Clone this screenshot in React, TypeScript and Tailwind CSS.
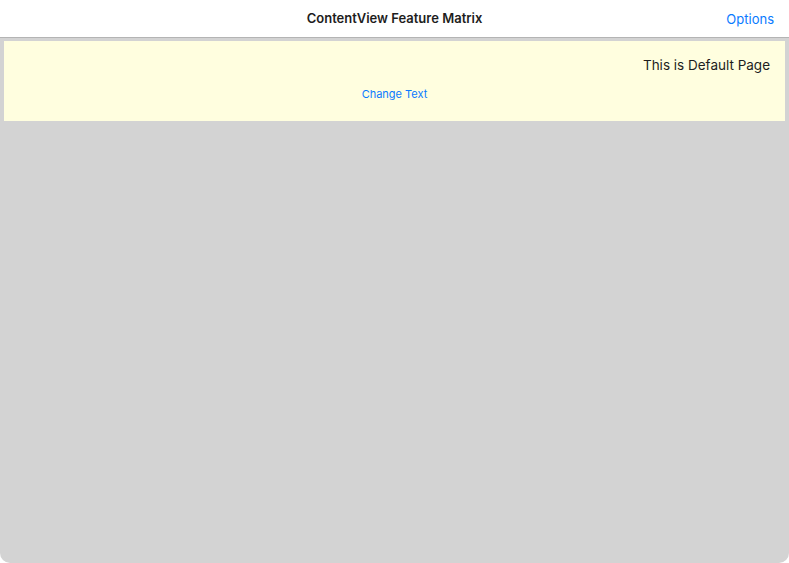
export default function App() {
  return (
    <div className="h-[563px] w-[789px] bg-white font-['Inter','Liberation_Sans',sans-serif]">
      <div className="flex h-full flex-col overflow-hidden rounded-b-[10px] bg-[#d3d3d3]">
        <header className="relative flex h-[38px] shrink-0 items-center justify-center border-b border-[#b4b4b4] bg-white">
          <h1 className="text-[13px] font-semibold text-[#1d1d1d]">ContentView Feature Matrix</h1>
          <button className="absolute right-[15px] top-[10px] text-[13px] text-[#0a7aff]">Options</button>
        </header>
        <div className="px-[4px] pt-[3px]">
          <div className="flex h-[80px] flex-col bg-[#fffedf] px-[15px] pt-[15px]">
            <p className="self-end text-[13.5px] leading-[19px] text-[#1d1d1d]">This is Default Page</p>
            <button className="mt-[11px] self-center text-[11px] text-[#0a7aff]">Change Text</button>
          </div>
        </div>
      </div>
    </div>
  );
}
